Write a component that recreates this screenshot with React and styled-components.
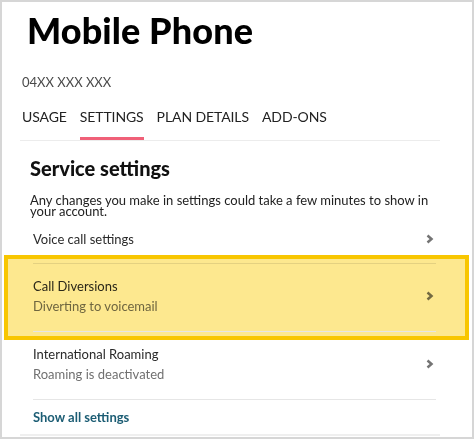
import React from 'react';
import styled, { createGlobalStyle } from 'styled-components';

const GlobalStyle = createGlobalStyle`
  html, body {
    margin: 0;
    padding: 0;
    background: #fff;
  }
  body {
    font-family: Lato, "Noto Sans", sans-serif;
    color: #333;
  }
`;

const Frame = styled.div`
  position: relative;
  box-sizing: border-box;
  width: 474px;
  height: 439px;
  border: 2px solid #d6d6d6;
  background: #fff;
  padding: 0 32px 0 18px;
  overflow: hidden;
`;

const Title = styled.h1`
  margin: 6px 0 0 7px;
  font-size: 36px;
  line-height: 44px;
  font-weight: 900;
  color: #000;
  letter-spacing: 0.1px;
`;

const Number = styled.div`
  margin: 22px 0 0 2px;
  font-size: 13px;
  line-height: 16px;
  color: #4a4a4a;
`;

const Tabs = styled.nav`
  display: flex;
  gap: 13px;
  margin-top: 18px;
  padding-left: 2px;
  border-bottom: 1px solid #ececec;
`;

const Tab = styled.div`
  font-size: 14px;
  line-height: 18px;
  letter-spacing: -0.1px;
  color: #222;
  padding-bottom: 11px;
  border-bottom: 3px solid ${(p) => (p.$active ? '#f06078' : 'transparent')};
`;

const Card = styled.section`
  padding: 15px 4px 0 13px;
  border-bottom: 2px solid #efefef;
`;

const Heading = styled.h2`
  margin: 0 0 0 -3px;
  font-size: 20px;
  line-height: 24px;
  font-weight: 900;
  color: #111;
`;

const Note = styled.p`
  margin: 15px 0 0 -3px;
  font-size: 13px;
  line-height: 11px;
  color: #222;
`;

const Row = styled.div`
  position: relative;
  display: flex;
  align-items: center;
  justify-content: space-between;
  height: ${(p) => p.$h}px;
  border-top: ${(p) => (p.$line ? '1px solid #e6e6e6' : 'none')};
`;

const Labels = styled.div`
  display: flex;
  flex-direction: column;
  margin-top: ${(p) => p.$shift}px;
`;

const Label = styled.span`
  font-size: 13px;
  line-height: 20px;
  color: #2a2a2a;
`;

const Sub = styled.span`
  font-size: 13px;
  line-height: 20px;
  color: #707070;
`;

const Chevron = styled.svg`
  width: 8px;
  height: 10px;
  margin-right: 2px;
  margin-top: ${(p) => p.$up || 0}px;
`;

const Highlight = styled.div`
  position: absolute;
  top: -9px;
  bottom: -9px;
  left: -29px;
  right: -33px;
  border: 4px solid #f8c600;
  background: #fde88f;
  mix-blend-mode: multiply;
  pointer-events: none;
`;

const ShowAll = styled.a`
  display: flex;
  align-items: center;
  height: 34px;
  border-top: 1px solid #e6e6e6;
  font-size: 13px;
  font-weight: 700;
  color: #1c5d74;
  text-decoration: none;
`;

const Arrow = ({ up }) => (
  <Chevron $up={up} viewBox="0 0 8 10">
    <polyline points="1.5,1.5 5.5,5 1.5,8.5" fill="none" stroke="#747474" strokeWidth="2.5" />
  </Chevron>
);

const settings = [
  { id: 'voice', label: 'Voice call settings', h: 46 },
  { id: 'div', label: 'Call Diversions', sub: 'Diverting to voicemail', h: 67, line: true, marked: true },
  { id: 'roam', label: 'International Roaming', sub: 'Roaming is deactivated', h: 67, line: true },
];

export default function App() {
  return (
    <>
      <GlobalStyle />
      <Frame>
        <Title>Mobile Phone</Title>
        <Number>04XX XXX XXX</Number>
        <Tabs>
          <Tab>USAGE</Tab>
          <Tab $active>SETTINGS</Tab>
          <Tab>PLAN DETAILS</Tab>
          <Tab>ADD-ONS</Tab>
        </Tabs>
        <Card>
          <Heading>Service settings</Heading>
          <Note>Any changes you make in settings could take a few minutes to show in your account.</Note>
          {settings.map((s) => (
            <Row key={s.id} $h={s.h} $line={s.line}>
              <Labels $shift={s.sub ? -4 : -2}>
                <Label>{s.label}</Label>
                {s.sub && <Sub>{s.sub}</Sub>}
              </Labels>
              <Arrow up={s.sub ? -4 : -2} />
              {s.marked && <Highlight />}
            </Row>
          ))}
          <ShowAll href="#">Show all settings</ShowAll>
        </Card>
      </Frame>
    </>
  );
}
